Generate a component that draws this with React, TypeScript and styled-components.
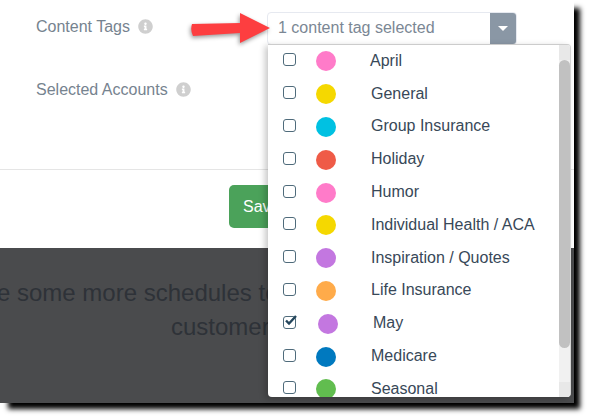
import { createGlobalStyle, styled } from 'styled-components'
import { FaInfoCircle } from 'react-icons/fa'

const GlobalStyle = createGlobalStyle`
  html, body {
    margin: 0;
    min-height: 420px;
    background: #fff;
    font-family: 'Liberation Sans', Arial, sans-serif;
  }
`

const tags = [
  { name: 'April', color: '#ff7bc9', first: true },
  { name: 'General', color: '#f5d800' },
  { name: 'Group Insurance', color: '#00c1e2' },
  { name: 'Holiday', color: '#ef5b47' },
  { name: 'Humor', color: '#ff7bc9' },
  { name: 'Individual Health / ACA', color: '#f5d800' },
  { name: 'Inspiration / Quotes', color: '#c377e0' },
  { name: 'Life Insurance', color: '#ffab4a' },
  { name: 'May', color: '#c377e0', checked: true },
  { name: 'Medicare', color: '#0079bf' },
  { name: 'Seasonal', color: '#61bd4f' },
]

const Frame = styled.div`
  position: relative;
  width: 574px;
  height: 403px;
  display: flex;
  flex-direction: column;
  box-shadow: 7px 7px 5px -1px #000;
`
const Modal = styled.section`
  height: 248px;
  background: #fff;
  display: flex;
  flex-direction: column;
`
const Form = styled.div`
  height: 170px;
  box-sizing: border-box;
  border-bottom: 1px solid #e5e5e5;
  padding: 17px 0 0 36px;
  display: flex;
  flex-direction: column;
  gap: 44px;
`
const Label = styled.label`
  display: flex;
  align-items: center;
  gap: 8px;
  height: 19px;
  font-size: 16px;
  color: #76838f;
  svg {
    color: #cfcfcf;
    font-size: 15px;
  }
`
const Footer = styled.div`
  flex: 1;
  padding: 15px 0 0 229px;
`
const SaveButton = styled.button`
  width: 90px;
  height: 43px;
  border: none;
  border-radius: 5px;
  background: #4ba25a;
  color: #fff;
  font: 16px 'Liberation Sans', Arial, sans-serif;
  text-align: left;
  padding: 0 14px;
`
const Backdrop = styled.div`
  flex: 1;
  background: #4a4b4d;
  overflow: hidden;
  padding-top: 28px;
  color: #2e3238;
  font-size: 24px;
  line-height: 34px;
  white-space: nowrap;
`
const BackdropLine = styled.div<{ $indent: number }>`
  text-indent: ${({ $indent }) => $indent}px;
`
const Select = styled.div`
  position: absolute;
  left: 267px;
  top: 12px;
  width: 250px;
  height: 33px;
  box-sizing: border-box;
  display: flex;
  border: 1px solid #e6e9f0;
  border-radius: 4px;
  background: #fff;
  overflow: hidden;
`
const SelectText = styled.div`
  flex: 1;
  padding-left: 10px;
  line-height: 29px;
  font-size: 16px;
  color: #7b8794;
`
const SelectCaret = styled.div`
  width: 26px;
  background: #8a97a5;
  display: flex;
  align-items: center;
  justify-content: center;
  &::after {
    content: '';
    border-left: 5px solid transparent;
    border-right: 5px solid transparent;
    border-top: 5px solid #fff;
  }
`
const Dropdown = styled.div`
  position: absolute;
  left: 268px;
  top: 44px;
  width: 303px;
  height: 353px;
  box-sizing: border-box;
  display: flex;
  background: #fff;
  border-top: 1px solid #ccc;
  border-right: 1px solid #d4d4d4;
  border-radius: 0 4px 4px 4px;
  box-shadow: -3px 2px 6px rgba(0, 0, 0, 0.22);
  overflow: hidden;
`
const List = styled.ul`
  flex: 1;
  margin: 0;
  padding: 0 0 0 15px;
  list-style: none;
  overflow: hidden;
`
const Row = styled.li`
  height: 32.8px;
  display: flex;
  align-items: center;
  font-size: 16px;
  color: #384858;
`
const Check = styled.span`
  width: 13px;
  height: 13px;
  flex: none;
  position: relative;
  box-sizing: border-box;
  margin-bottom: 3px;
  border: 1.5px solid #4f6b7b;
  border-radius: 3px;
  svg {
    position: absolute;
    left: 0;
    top: -3px;
  }
`
const Dot = styled.span<{ $color: string; $shift: boolean }>`
  width: 20px;
  height: 20px;
  flex: none;
  border-radius: 50%;
  background: ${({ $color }) => $color};
  margin-left: ${({ $shift }) => ($shift ? 22 : 20)}px;
`
const Name = styled.span<{ $first: boolean }>`
  margin-left: ${({ $first }) => ($first ? 34 : 35)}px;
  margin-bottom: 1px;
`
const Track = styled.div`
  width: 11px;
  flex: none;
  background: #f1f1f1;
  display: flex;
  flex-direction: column;
`
const TrackEnd = styled.div<{ $height: number }>`
  height: ${({ $height }) => $height}px;
  flex: none;
  background: #e8e8e8;
`
const TrackGap = styled.div`
  flex: 1;
`
const Thumb = styled.div`
  height: 288px;
  flex: none;
  background: #c1c1c1;
  border-radius: 6px;
`
const Arrow = styled.svg`
  position: absolute;
  left: 188px;
  top: 8px;
  filter: drop-shadow(-1px 2px 2px rgba(0, 0, 0, 0.4));
`

export default function App() {
  return (
    <>
      <GlobalStyle />
      <Frame>
        <Modal>
          <Form>
            <Label>
              Content Tags <FaInfoCircle />
            </Label>
            <Label>
              Selected Accounts <FaInfoCircle />
            </Label>
          </Form>
          <Footer>
            <SaveButton>Save</SaveButton>
          </Footer>
        </Modal>
        <Backdrop>
          <BackdropLine $indent={-3}>e some more schedules to</BackdropLine>
          <BackdropLine $indent={171}>customers</BackdropLine>
        </Backdrop>
        <Select>
          <SelectText>1 content tag selected</SelectText>
          <SelectCaret />
        </Select>
        <Dropdown>
          <List>
            {tags.map((tag) => (
              <Row key={tag.name}>
                <Check>
                  {tag.checked && (
                    <svg width="14" height="13" viewBox="0 0 14 13">
                      <path d="M2 6.5 L5 9.5 L12 2" fill="none" stroke="#24465c" strokeWidth="2.4" />
                    </svg>
                  )}
                </Check>
                <Dot $color={tag.color} $shift={!!tag.checked} />
                <Name $first={!!tag.first}>{tag.name}</Name>
              </Row>
            ))}
          </List>
          <Track>
            <TrackEnd $height={15} />
            <Thumb />
            <TrackGap />
            <TrackEnd $height={15} />
          </Track>
        </Dropdown>
        <Arrow width="86" height="40" viewBox="0 0 86 40">
          <path
            d="M4 16 L52 15 L52 5 L82 20 L52 35 L52 25 L5 28 Q2 22 4 16 Z"
            fill="#fd3e40"
          />
        </Arrow>
      </Frame>
    </>
  )
}
